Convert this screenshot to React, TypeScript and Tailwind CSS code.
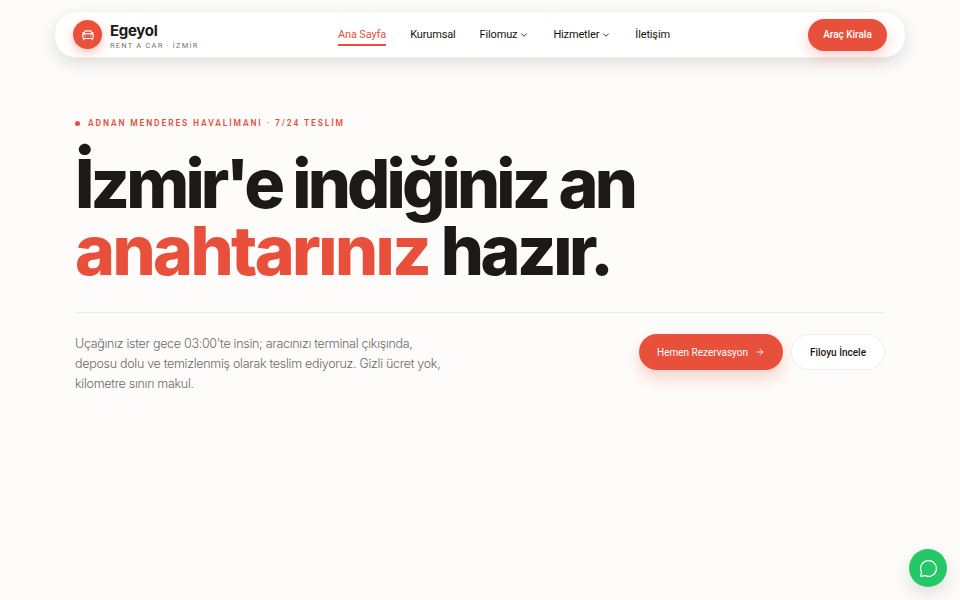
import { CarFront, ChevronDown, ArrowRight, MessageCircle } from "lucide-react";

const sans = "font-['Roboto','Inter',sans-serif]";
const display = "font-['Inter','Lato',sans-serif]";

function NavItem({ label, active, chevron }: { label: string; active?: boolean; chevron?: boolean }) {
  return (
    <a className={`relative flex items-center gap-[2px] whitespace-nowrap py-1 text-[11px] font-normal tracking-[-0.15px] ${active ? "text-[#e9503b]" : "text-[#14110f]"}`}>
      {label}
      {chevron && <ChevronDown size={10} strokeWidth={2} />}
      {active && <span className="absolute left-0 right-0 bottom-[1px] h-[2px] bg-[#e9503b]" />}
    </a>
  );
}

export default function App() {
  return (
    <div className={`relative h-[600px] w-[960px] overflow-hidden bg-[#fefcfa] ${sans}`}>
      <div className="px-[54px] pt-[11px]">
        <header className="flex h-[47px] items-center rounded-[22px] border border-[#f3efec] bg-white pl-[18px] pr-[18px] shadow-[0_6px_16px_rgba(28,25,23,0.12)]">
          <div className="flex w-[265px] items-center gap-[8px]">
            <div className="flex h-[29px] w-[29px] items-center justify-center rounded-full bg-[#e9503b] shadow-[0_4px_10px_rgba(233,80,59,0.35)]">
              <CarFront size={14} strokeWidth={2} className="text-white" />
            </div>
            <div className="flex flex-col pt-[3px]">
              <span className={`text-[15px] font-bold leading-[18px] tracking-[-0.3px] text-[#1c1917] ${display}`}>Egeyol</span>
              <span className="text-[7.5px] leading-[11px] tracking-[1.2px] text-[#78716c]">RENT A CAR · İZMİR</span>
            </div>
          </div>
          <nav className="mt-[1px] flex items-center gap-[24px]">
            <NavItem label="Ana Sayfa" active />
            <NavItem label="Kurumsal" />
            <NavItem label="Filomuz" chevron />
            <NavItem label="Hizmetler" chevron />
            <NavItem label="İletişim" />
          </nav>
          <div className="flex flex-1 justify-end">
            <button className="flex h-[32px] w-[79px] items-center justify-center rounded-full bg-[#e9503b] text-[10px] font-medium text-white shadow-[0_6px_14px_rgba(233,80,59,0.25)]">
              Araç Kirala
            </button>
          </div>
        </header>
      </div>

      <main className="px-[75px] pt-[59px]">
        <div className="flex items-center gap-[8px]">
          <span className="h-[5px] w-[5px] rounded-full bg-[#e9503b]" />
          <span className="text-[8.5px] font-semibold leading-[12px] tracking-[1.86px] text-[#e9503b]">ADNAN MENDERES HAVALİMANI · 7/24 TESLİM</span>
        </div>
        <h1 className={`mt-[21px] whitespace-nowrap text-[68px] font-extrabold leading-[67px] text-[#1c1917] ${display}`}>
          <span className="tracking-[-3.85px]">İzmir'e indiğiniz an</span>
          <br />
          <span className="tracking-[-3.4px]">
            <span className="tracking-[-2.6px] text-[#e9503b]">anahtarınız</span> hazır.
          </span>
        </h1>
        <div className="mt-[28px] flex justify-between border-t border-[#ece8e4] pt-[21px]">
          <p className={`w-[372px] text-[12.5px] font-light leading-[20px] tracking-[-0.3px] text-[#6f6862] ${display}`}>
            Uçağınız ister gece 03:00'te insin; aracınızı terminal çıkışında, deposu dolu ve temizlenmiş olarak teslim ediyoruz. Gizli ücret yok, kilometre sınırı makul.
          </p>
          <div className="flex items-start gap-[8px]">
            <button className="flex h-[36px] w-[144px] items-center justify-center gap-[7px] rounded-full bg-[#e9503b] text-[10px] font-normal text-white shadow-[0_8px_16px_rgba(233,80,59,0.25)]">
              Hemen Rezervasyon <ArrowRight size={10} strokeWidth={2} />
            </button>
            <button className="flex h-[36px] w-[94px] items-center justify-center rounded-full border border-[#efebe8] bg-white text-[10px] font-medium text-[#1c1917]">
              Filoyu İncele
            </button>
          </div>
        </div>
      </main>

      <button className="absolute left-[909px] top-[549px] flex h-[38px] w-[38px] items-center justify-center rounded-full bg-[#25c866] shadow-[0_8px_18px_rgba(0,0,0,0.12)]">
        <MessageCircle size={19} strokeWidth={1.6} className="text-white" />
      </button>
    </div>
  );
}
